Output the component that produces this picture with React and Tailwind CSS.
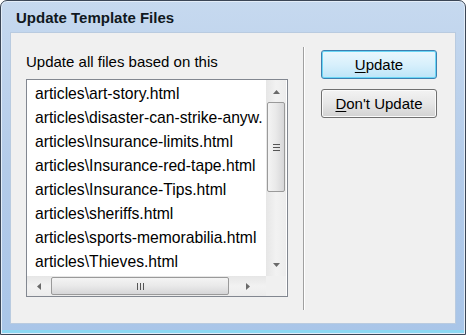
import React from "react";

const files = [
  "articles\\art-story.html",
  "articles\\disaster-can-strike-anyw.",
  "articles\\Insurance-limits.html",
  "articles\\Insurance-red-tape.html",
  "articles\\Insurance-Tips.html",
  "articles\\sheriffs.html",
  "articles\\sports-memorabilia.html",
  "articles\\Thieves.html",
];

const Arrow = ({ dir }) => {
  const pts = {
    up: "0,4 3.5,0 7,4",
    down: "0,0 3.5,4 7,0",
    left: "4,0 0,3.5 4,7",
    right: "0,0 4,3.5 0,7",
  }[dir];
  const vert = dir === "up" || dir === "down";
  return (
    <svg width={vert ? 7 : 4} height={vert ? 4 : 7} viewBox={vert ? "0 0 7 4" : "0 0 4 7"}>
      <polygon points={pts} fill="#6a6a6a" />
    </svg>
  );
};

const App = () => {
  return (
    <div className="w-[466px] h-[335px] bg-white" style={{ fontFamily: '"Liberation Sans", Arial, sans-serif' }}>
      <div className="w-full h-full flex flex-col rounded-t-[7px] border border-[#3b4656] bg-gradient-to-b from-[#c6d9ef] via-[#b3cbe9] to-[#a9c5e8] shadow-[inset_0_0_0_1px_#e3edf8,inset_0_-4px_0_#8cd8f2]">

        {/* Title bar */}
        <div className="h-[31px] flex items-center pl-[15px] pt-[1px]">
          <span className="text-[15px] font-bold text-[#101820] leading-none">Update Template Files</span>
        </div>

        {/* Client area */}
        <div className="flex-1 px-[9px] pb-[10px] flex">
          <div className="flex-1 flex bg-[#f0f0f0] border border-[#b9cbe0] text-black">

            {/* Left column */}
            <div className="pl-[15px] pt-[20px]">
              <div className="text-[15px] leading-[18px] h-[18px]">Update all files based on this</div>

              <div className="mt-[8px] w-[262px] h-[218px] border border-[#828790] bg-white flex flex-col">
                <div className="flex h-[196px]">
                  <div className="w-[239px] overflow-hidden pt-[2px]">
                    {files.map((f) => (
                      <div key={f} className="h-[24px] flex items-center pl-[8px] text-[15.7px] whitespace-nowrap">
                        {f}
                      </div>
                    ))}
                  </div>

                  {/* Vertical scrollbar */}
                  <div className="w-[20px] flex flex-col bg-gradient-to-r from-[#e6e6e6] via-[#f2f2f2] to-[#ececec]">
                    <div className="h-[22px] flex items-center justify-center pt-[2px]">
                      <Arrow dir="up" />
                    </div>
                    <div className="mx-[1px] h-[90px] rounded-[2px] border border-[#9a9a9a] bg-gradient-to-r from-[#f4f4f4] via-[#e9e9e9] to-[#d6d6d8] flex flex-col items-center justify-center gap-[2px]">
                      <div className="w-[7px] h-[1px] bg-[#555]" />
                      <div className="w-[7px] h-[1px] bg-[#555]" />
                      <div className="w-[7px] h-[1px] bg-[#555]" />
                    </div>
                    <div className="flex-1" />
                    <div className="h-[22px] flex items-center justify-center">
                      <Arrow dir="down" />
                    </div>
                  </div>
                </div>

                {/* Horizontal scrollbar */}
                <div className="flex h-[20px]">
                  <div className="w-[239px] flex items-center bg-gradient-to-b from-[#e6e6e6] via-[#f2f2f2] to-[#ececec]">
                    <div className="w-[24px] flex justify-center">
                      <Arrow dir="left" />
                    </div>
                    <div className="w-[178px] h-[18px] rounded-[2px] border border-[#9a9a9a] bg-gradient-to-b from-[#f4f4f4] via-[#e9e9e9] to-[#d6d6d8] flex items-center justify-center gap-[2px]">
                      <div className="w-[1px] h-[7px] bg-[#555]" />
                      <div className="w-[1px] h-[7px] bg-[#555]" />
                      <div className="w-[1px] h-[7px] bg-[#555]" />
                    </div>
                    <div className="flex-1 flex justify-center">
                      <Arrow dir="right" />
                    </div>
                  </div>
                  <div className="w-[20px] bg-[#f0f0f0]" />
                </div>
              </div>
            </div>

            {/* Separator */}
            <div className="ml-[15px] mt-[14px] mb-[13px] w-[2px] border-l border-[#a0a0a0] bg-white" />

            {/* Buttons */}
            <div className="ml-[16px] pt-[17px] flex flex-col gap-[10px]">
              <button className="w-[116px] h-[29px] rounded-[3px] border border-[#3c7fb1] bg-gradient-to-b from-[#eaf7fd] via-[#d8f0fc] to-[#bde5f8] shadow-[inset_0_0_0_1px_#6ad6f5] text-[15px] leading-none">
                <span className="underline underline-offset-[2px]">U</span>pdate
              </button>
              <button className="w-[116px] h-[29px] rounded-[3px] border border-[#707070] bg-gradient-to-b from-[#f3f3f3] via-[#e6e6e6] to-[#d2d2d2] shadow-[inset_0_0_0_1px_#fafafa] text-[15px] leading-none">
                <span className="underline underline-offset-[2px]">D</span>on't Update
              </button>
            </div>

          </div>
        </div>
      </div>
    </div>
  );
};

export default App;
